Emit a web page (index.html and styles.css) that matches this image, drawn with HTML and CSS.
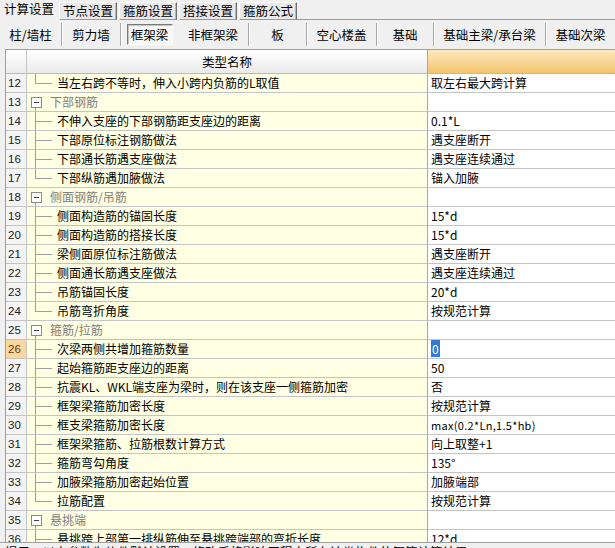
FILE: index.html
```html
<!DOCTYPE html>
<html lang="zh-CN">
<head>
<meta charset="utf-8">
<title>计算设置</title>
<link rel="stylesheet" href="styles.css">
</head>
<body>
<div class="tabs">
  <div class="tab active">计算设置</div>
  <div class="tab">节点设置</div>
  <div class="tab">箍筋设置</div>
  <div class="tab">搭接设置</div>
  <div class="tab">箍筋公式</div>
  <div class="tab-fill"></div>
</div>
<div class="toolbar">
  <div class="tb">柱/墙柱</div>
  <div class="tb sep">剪力墙</div>
  <div class="tb sep"><span class="pressed">框架梁</span></div>
  <div class="tb">非框架梁</div>
  <div class="tb sep">板</div>
  <div class="tb sep">空心楼盖</div>
  <div class="tb sep">基础</div>
  <div class="tb sep">基础主梁/承台梁</div>
  <div class="tb sep">基础次梁</div>
</div>
<div class="grid">
  <div class="row head"><div class="num"></div><div class="name">类型名称</div><div class="val"></div></div>
  <div class="row"><div class="num">12</div><div class="name last">当左右跨不等时，伸入小跨内负筋的L取值</div><div class="val">取左右最大跨计算</div></div>
  <div class="row"><div class="num">13</div><div class="name group"><span class="box"></span>下部钢筋</div><div class="val"></div></div>
  <div class="row"><div class="num">14</div><div class="name child">不伸入支座的下部钢筋距支座边的距离</div><div class="val">0.1*L</div></div>
  <div class="row"><div class="num">15</div><div class="name child">下部原位标注钢筋做法</div><div class="val">遇支座断开</div></div>
  <div class="row"><div class="num">16</div><div class="name child">下部通长筋遇支座做法</div><div class="val">遇支座连续通过</div></div>
  <div class="row"><div class="num">17</div><div class="name last">下部纵筋遇加腋做法</div><div class="val">锚入加腋</div></div>
  <div class="row"><div class="num">18</div><div class="name group"><span class="box"></span>侧面钢筋/吊筋</div><div class="val"></div></div>
  <div class="row"><div class="num">19</div><div class="name child">侧面构造筋的锚固长度</div><div class="val">15*d</div></div>
  <div class="row"><div class="num">20</div><div class="name child">侧面构造筋的搭接长度</div><div class="val">15*d</div></div>
  <div class="row"><div class="num">21</div><div class="name child">梁侧面原位标注筋做法</div><div class="val">遇支座断开</div></div>
  <div class="row"><div class="num">22</div><div class="name child">侧面通长筋遇支座做法</div><div class="val">遇支座连续通过</div></div>
  <div class="row"><div class="num">23</div><div class="name child">吊筋锚固长度</div><div class="val">20*d</div></div>
  <div class="row"><div class="num">24</div><div class="name last">吊筋弯折角度</div><div class="val">按规范计算</div></div>
  <div class="row"><div class="num">25</div><div class="name group"><span class="box"></span>箍筋/拉筋</div><div class="val"></div></div>
  <div class="row"><div class="num current">26</div><div class="name child">次梁两侧共增加箍筋数量</div><div class="val"><span class="sel">0</span></div></div>
  <div class="row"><div class="num">27</div><div class="name child">起始箍筋距支座边的距离</div><div class="val">50</div></div>
  <div class="row"><div class="num">28</div><div class="name child">抗震KL、WKL端支座为梁时，则在该支座一侧箍筋加密</div><div class="val">否</div></div>
  <div class="row"><div class="num">29</div><div class="name child">框架梁箍筋加密长度</div><div class="val">按规范计算</div></div>
  <div class="row"><div class="num">30</div><div class="name child">框支梁箍筋加密长度</div><div class="val small">max(0.2*Ln,1.5*hb)</div></div>
  <div class="row"><div class="num">31</div><div class="name child">框架梁箍筋、拉筋根数计算方式</div><div class="val">向上取整+1</div></div>
  <div class="row"><div class="num">32</div><div class="name child">箍筋弯勾角度</div><div class="val">135°</div></div>
  <div class="row"><div class="num">33</div><div class="name child">加腋梁箍筋加密起始位置</div><div class="val">加腋端部</div></div>
  <div class="row"><div class="num">34</div><div class="name last">拉筋配置</div><div class="val">按规范计算</div></div>
  <div class="row"><div class="num">35</div><div class="name group"><span class="box"></span>悬挑端</div><div class="val"></div></div>
  <div class="row"><div class="num">36</div><div class="name child">悬挑跨上部第一排纵筋伸至悬挑跨端部的弯折长度</div><div class="val">12*d</div></div>
</div>
<div class="status">提示：以上参数为软件默认设置，修改后将影响工程中所有该类构件的钢筋计算结果</div>
</body>
</html>
```
FILE: styles.css
```css
html, body {
  margin: 0;
  padding: 0;
}
body {
  width: 615px;
  height: 548px;
  overflow: hidden;
  background: #f0f0f0;
  font-family: "Noto Sans CJK SC", "Liberation Sans", sans-serif;
  font-size: 12px;
  color: #000;
}

/* top tabs */
.tabs {
  display: flex;
  height: 20px;
  align-items: flex-end;
}
.tab {
  width: 56px;
  height: 16px;
  line-height: 15px;
  margin-left: 2px;
  text-align: center;
  background: #e9e9e9;
  border-top: 1px solid #ffffff;
  border-left: 1px solid #ffffff;
  border-right: 1px solid #6f6f6f;
  border-bottom: 1px solid #9a9a9a;
  font-size: 12.5px;
  box-shadow: inset -1px 0 0 #b8b8b8;
}
.tab.active {
  width: 57px;
  height: 20px;
  line-height: 18px;
  margin-left: 0;
  text-align: left;
  padding-left: 4px;
  box-sizing: border-box;
  background: #f0f0f0;
  border: none;
  box-shadow: none;
  font-size: 12.5px;
}
.tab-fill {
  flex: 1;
  height: 19px;
  border-bottom: 1px solid #9a9a9a;
}

/* toolbar */
.toolbar {
  display: grid;
  grid-template-columns: 61px 59px 58px 70px 58px 70px 57px 112px 70px;
  height: 23px;
  margin-top: 3px;
}
.tb {
  display: flex;
  align-items: center;
  justify-content: center;
  font-size: 12.5px;
  white-space: nowrap;
}
.tb.sep {
  border-left: 1px solid #a8a8a8;
  box-shadow: inset 1px 0 0 #ffffff;
}
.pressed {
  display: flex;
  align-items: center;
  justify-content: center;
  width: 44px;
  height: 19px;
  background: #f7f7f7;
  border-top: 1px solid #7a7a7a;
  border-left: 1px solid #7a7a7a;
  border-right: 1px solid #ffffff;
  border-bottom: 1px solid #ffffff;
  box-shadow: inset 1px 1px 0 #c4c4c4;
}

/* grid */
.grid {
  margin: 3px 0 0 5px;
  height: 492px;
  overflow: hidden;
  border-top: 1px solid #a0a0a0;
  border-left: 1px solid #a0a0a0;
  background: #ffffff;
}
.row {
  display: grid;
  grid-template-columns: 21px 401px 1fr;
  height: 19px;
}
.row > div {
  border-bottom: 1px solid #c4c4c4;
  box-sizing: border-box;
  line-height: 18px;
  white-space: nowrap;
  overflow: hidden;
}
.num {
  background: #f4f4f4;
  border-right: 1px solid #c4c4c4;
  padding-left: 2px;
  font-family: "Liberation Sans", "DejaVu Sans", sans-serif;
  font-size: 11.5px;
  color: #1a1a1a;
}
.num.current {
  background: #fbd79f;
  color: #5a3a10;
}
.name {
  background-color: #ffffe3;
  border-right: 1px solid #a8a8a8;
}
.val {
  background: #ffffff;
  padding-left: 3px;
}
.val.small {
  font-size: 11px;
  letter-spacing: 0.3px;
}
.sel {
  background: #3478d8;
  color: #ffffff;
  padding: 0 1px;
}

/* header */
.row.head {
  height: 24px;
}
.row.head > div {
  line-height: 23px;
  border-bottom: 1px solid #b8b8b8;
}
.row.head .num {
  background: linear-gradient(#ffffff, #ececec);
}
.row.head .name {
  background: linear-gradient(#ffffff, #ebebeb);
  text-align: center;
  font-size: 12.5px;
}
.row.head .val {
  background: linear-gradient(#fce9c0, #f2c46c);
}

/* tree lines */
.name.child,
.name.last {
  padding-left: 30px;
  background-repeat: no-repeat;
}
.name.child {
  background-image:
    linear-gradient(#9c9c9c, #9c9c9c),
    linear-gradient(#9c9c9c, #9c9c9c);
  background-size: 1px 100%, 17px 1px;
  background-position: 8px 0, 8px 9px;
}
.name.last {
  background-image:
    linear-gradient(#9c9c9c, #9c9c9c),
    linear-gradient(#9c9c9c, #9c9c9c);
  background-size: 1px 10px, 17px 1px;
  background-position: 8px 0, 8px 9px;
}
.name.group {
  display: flex;
  align-items: center;
  padding-left: 4px;
  color: #808080;
  background-image: linear-gradient(#9c9c9c, #9c9c9c);
  background-size: 1px 5px;
  background-position: 8px 14px;
  background-repeat: no-repeat;
}
.box {
  display: inline-block;
  width: 9px;
  height: 9px;
  margin-right: 8px;
  border: 1px solid #8a8a8a;
  background: linear-gradient(#404040, #404040) center / 5px 1px no-repeat, #ffffff;
  flex: none;
}

/* status */
.status {
  border-top: 1px solid #a0a0a0;
  padding: 2px 0 0 5px;
  line-height: 14px;
  white-space: nowrap;
  font-size: 12.5px;
}
```
